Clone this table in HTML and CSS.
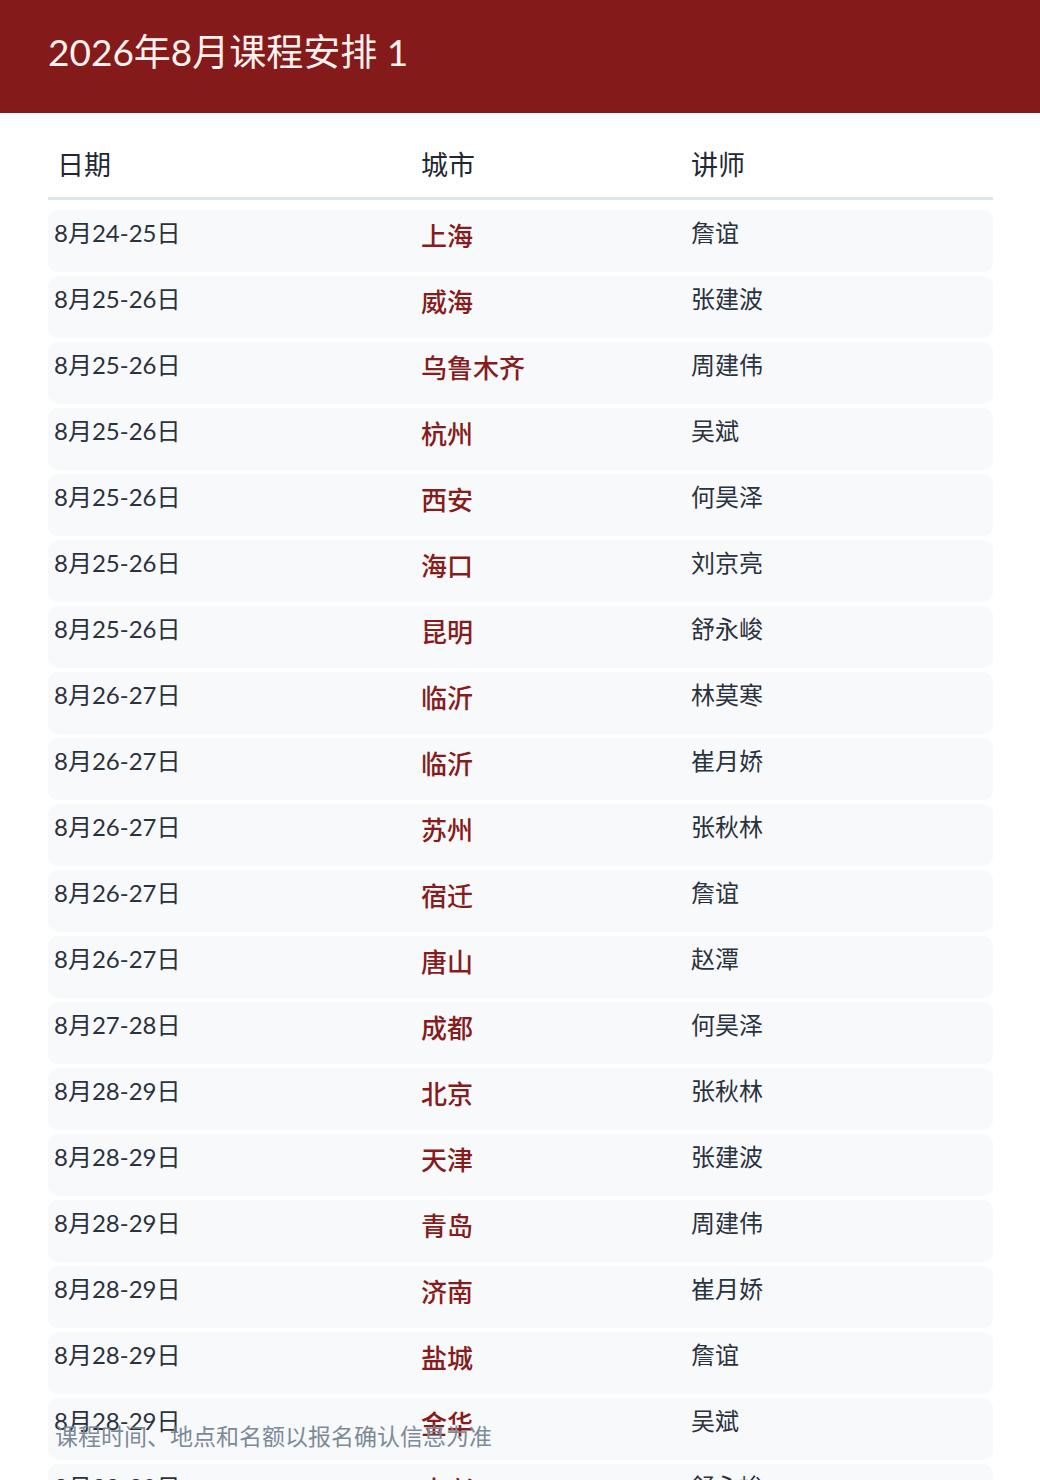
FILE: index.html
```html
<!DOCTYPE html>
<html lang="zh-CN">
<head>
<meta charset="utf-8">
<title>2026年8月课程安排 1</title>
<link rel="stylesheet" href="styles.css">
</head>
<body>
<header class="banner">
  <h1 class="title">2026年8月课程安排 1</h1>
</header>
<main class="content">
  <div class="thead">
    <div class="th th-date">日期</div>
    <div class="th">城市</div>
    <div class="th">讲师</div>
  </div>
  <div class="rows">
    <div class="row"><div class="date">8月24-25日</div><div class="city">上海</div><div class="teacher">詹谊</div></div>
    <div class="row"><div class="date">8月25-26日</div><div class="city">威海</div><div class="teacher">张建波</div></div>
    <div class="row"><div class="date">8月25-26日</div><div class="city">乌鲁木齐</div><div class="teacher">周建伟</div></div>
    <div class="row"><div class="date">8月25-26日</div><div class="city">杭州</div><div class="teacher">吴斌</div></div>
    <div class="row"><div class="date">8月25-26日</div><div class="city">西安</div><div class="teacher">何昊泽</div></div>
    <div class="row"><div class="date">8月25-26日</div><div class="city">海口</div><div class="teacher">刘京亮</div></div>
    <div class="row"><div class="date">8月25-26日</div><div class="city">昆明</div><div class="teacher">舒永峻</div></div>
    <div class="row"><div class="date">8月26-27日</div><div class="city">临沂</div><div class="teacher">林莫寒</div></div>
    <div class="row"><div class="date">8月26-27日</div><div class="city">临沂</div><div class="teacher">崔月娇</div></div>
    <div class="row"><div class="date">8月26-27日</div><div class="city">苏州</div><div class="teacher">张秋林</div></div>
    <div class="row"><div class="date">8月26-27日</div><div class="city">宿迁</div><div class="teacher">詹谊</div></div>
    <div class="row"><div class="date">8月26-27日</div><div class="city">唐山</div><div class="teacher">赵潭</div></div>
    <div class="row"><div class="date">8月27-28日</div><div class="city">成都</div><div class="teacher">何昊泽</div></div>
    <div class="row"><div class="date">8月28-29日</div><div class="city">北京</div><div class="teacher">张秋林</div></div>
    <div class="row"><div class="date">8月28-29日</div><div class="city">天津</div><div class="teacher">张建波</div></div>
    <div class="row"><div class="date">8月28-29日</div><div class="city">青岛</div><div class="teacher">周建伟</div></div>
    <div class="row"><div class="date">8月28-29日</div><div class="city">济南</div><div class="teacher">崔月娇</div></div>
    <div class="row"><div class="date">8月28-29日</div><div class="city">盐城</div><div class="teacher">詹谊</div></div>
    <div class="row"><div class="date">8月28-29日</div><div class="city">金华</div><div class="teacher">吴斌</div></div>
    <div class="row"><div class="date">8月28-29日</div><div class="city">大兴</div><div class="teacher">舒永峻</div></div>
  </div>
</main>
<p class="note">课程时间、地点和名额以报名确认信息为准</p>
</body>
</html>
```

FILE: styles.css
```css
html, body {
  margin: 0;
  padding: 0;
}
body {
  width: 1040px;
  height: 1480px;
  overflow: hidden;
  position: relative;
  background: #ffffff;
  font-family: "Lato", "Noto Sans CJK SC", sans-serif;
  color: #2a323d;
}
.banner {
  height: 113px;
  background: #851a1a;
  padding: 0 48px;
  box-sizing: border-box;
  display: flex;
  align-items: flex-start;
}
.title {
  margin: 0;
  padding-top: 28px;
  font-size: 37px;
  line-height: 48px;
  font-weight: 400;
  color: #fdf2ee;
}
.content {
  padding: 20px 47px 0 48px;
}
.thead {
  display: grid;
  grid-template-columns: 373px 270px 1fr;
  height: 64px;
  align-items: center;
  border-bottom: 3px solid #dfe6eb;
}
.th {
  font-size: 27px;
  font-weight: 400;
  color: #1f2833;
  line-height: 64px;
}
.th-date {
  padding-left: 9px;
}
.rows {
  display: flex;
  flex-direction: column;
  gap: 5px;
  padding-top: 10px;
}
.row {
  display: grid;
  grid-template-columns: 367px 270px 1fr;
  height: 61px;
  box-sizing: border-box;
  padding: 8px 6px 0 6px;
  background: #f8f9fb;
  border-radius: 10px;
  box-shadow: 0 1px 1px rgba(30, 40, 60, 0.03);
}
.date,
.teacher {
  font-size: 24px;
  line-height: 30px;
  color: #2a323d;
}
.city {
  font-size: 26px;
  line-height: 30px;
  padding-top: 3px;
  font-weight: 500;
  color: #861c1c;
}
.note {
  position: absolute;
  left: 55px;
  top: 1420px;
  margin: 0;
  font-size: 23px;
  line-height: 32px;
  color: #7d8a98;
}
```
